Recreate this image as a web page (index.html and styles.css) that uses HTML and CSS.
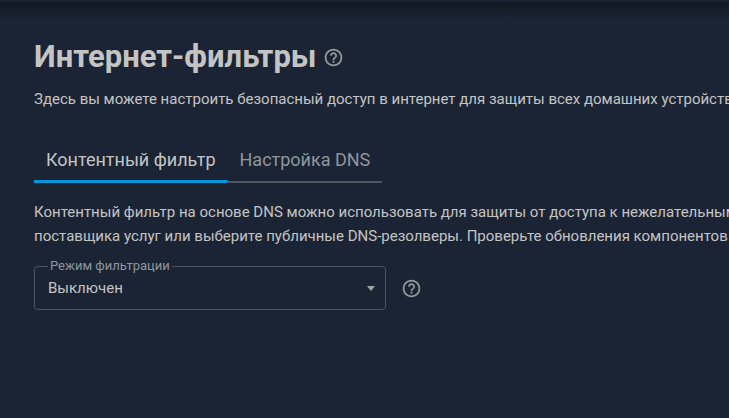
FILE: index.html
```html
<!DOCTYPE html>
<html lang="ru">
<head>
<meta charset="utf-8">
<meta name="viewport" content="width=device-width, initial-scale=1">
<title>Интернет-фильтры</title>
<link rel="stylesheet" href="styles.css">
</head>
<body>
<div class="topbar"></div>
<main class="page">
  <div class="title">
    <h1>Интернет-фильтры</h1>
    <button class="help" type="button" aria-label="Справка">
      <svg viewBox="0 0 24 24"><path d="M11 18h2v-2h-2v2zm1-16C6.48 2 2 6.48 2 12s4.48 10 10 10 10-4.48 10-10S17.52 2 12 2zm0 18c-4.41 0-8-3.59-8-8s3.59-8 8-8 8 3.59 8 8-3.59 8-8 8zm0-14c-2.21 0-4 1.79-4 4h2c0-1.1.9-2 2-2s2 .9 2 2c0 2-3 1.75-3 5h2c0-2.25 3-2.5 3-5 0-2.21-1.79-4-4-4z"/></svg>
    </button>
  </div>
  <p class="text">Здесь вы можете настроить безопасный доступ в интернет для защиты всех домашних устройств</p>

  <nav class="tabs">
    <a class="tab active" href="#filter">Контентный фильтр</a>
    <a class="tab" href="#dns">Настройка DNS</a>
  </nav>

  <p class="text">Контентный фильтр на основе DNS можно использовать для защиты от доступа к нежелательным<br>
  поставщика услуг или выберите публичные DNS-резолверы. Проверьте обновления компонентов</p>

  <div class="row">
    <div class="field">
      <label for="mode">Режим фильтрации</label>
      <select id="mode">
        <option>Выключен</option>
      </select>
      <svg class="arrow" viewBox="0 0 8 5"><path d="M0 0h8L4 5z"/></svg>
    </div>
    <button class="help" type="button" aria-label="О режиме фильтрации">
      <svg viewBox="0 0 24 24"><path d="M11 18h2v-2h-2v2zm1-16C6.48 2 2 6.48 2 12s4.48 10 10 10 10-4.48 10-10S17.52 2 12 2zm0 18c-4.41 0-8-3.59-8-8s3.59-8 8-8 8 3.59 8 8-3.59 8-8 8zm0-14c-2.21 0-4 1.79-4 4h2c0-1.1.9-2 2-2s2 .9 2 2c0 2-3 1.75-3 5h2c0-2.25 3-2.5 3-5 0-2.21-1.79-4-4-4z"/></svg>
    </button>
  </div>
</main>
</body>
</html>
```
FILE: styles.css
```css
* {
  box-sizing: border-box;
}

body {
  margin: 0;
  min-height: 100vh;
  background: #1b2434;
  color: #c4c4c4;
  font-family: Roboto, "Liberation Sans", sans-serif;
  font-size: 15px;
  overflow: hidden;
}

.topbar {
  height: 2px;
  background: #1b2434;
}

.page {
  padding: 35px 34px;
  background: linear-gradient(#121822, #1b2434 16px);
}

.title {
  display: flex;
  align-items: center;
  gap: 6px;
}

h1 {
  margin: 0;
  font-size: 31px;
  line-height: 40px;
  font-weight: bold;
}

.help {
  display: flex;
  padding: 0;
  border: 0;
  background: none;
  cursor: pointer;
}

.help svg {
  width: 21px;
  height: 21px;
  fill: #959a9d;
}

.text {
  margin: 10px 0 0;
  line-height: 24px;
  white-space: nowrap;
}

.tabs {
  display: flex;
  margin: 31px 0 17px;
}

.tab {
  padding: 0 12px;
  height: 41px;
  line-height: 36px;
  font-size: 18px;
  color: #8f969c;
  text-decoration: none;
  background: linear-gradient(#4f5560, #4f5560) bottom / 100% 2px no-repeat;
}

.tab.active {
  color: #c4c4c4;
  background: linear-gradient(#0096dc, #0096dc) bottom / 100% 3px no-repeat;
}

.row {
  display: flex;
  align-items: center;
  gap: 15px;
  margin-top: 18px;
}

.field {
  position: relative;
  width: 100%;
  max-width: 352px;
}

.field label {
  position: absolute;
  top: -8px;
  left: 14px;
  padding: 0 2px;
  font-size: 13px;
  line-height: 16px;
  color: #8f969c;
  background: #1b2434;
}

select {
  display: block;
  width: 100%;
  height: 44px;
  padding: 0 13px;
  border: 1px solid #4f5560;
  border-radius: 4px;
  appearance: none;
  background: none;
  color: #c4c4c4;
  font: inherit;
}

.arrow {
  position: absolute;
  top: 20px;
  right: 11px;
  width: 8px;
  height: 5px;
  fill: #a0a4a6;
  pointer-events: none;
}
```
